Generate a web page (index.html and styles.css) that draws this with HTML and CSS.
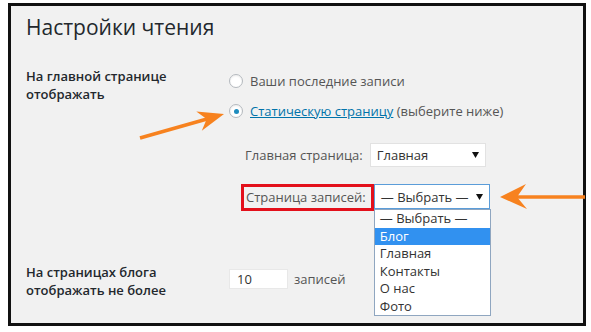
FILE: index.html
```html
<!DOCTYPE html>
<html>
<head>
	<meta charset="utf-8">
	<link rel="stylesheet" href="styles.css">
	<title>Настройки чтения</title>
</head>
<body>
	<div class="frame">
		<h1 class="title">Настройки чтения</h1>

		<div class="setting">
			<div class="setting-label">На главной странице<br>отображать</div>
			<div class="setting-field">
				<label class="choice choice-first"><span class="radio"></span>Ваши последние записи</label>
				<label class="choice choice-second"><span class="radio radio-on"></span><a href="#" class="link">Статическую страницу</a>&nbsp;(выберите ниже)</label>

				<div class="sub sub-main">
					<span class="sub-label">Главная страница:</span>
					<span class="select select-main">
						<span>Главная</span>
						<svg class="caret" width="7" height="6" viewBox="0 0 7 6"><polygon points="0,0 7,0 3.5,6" fill="#111"/></svg>
					</span>
				</div>

				<div class="sub sub-posts">
					<span class="marked">Страница записей:</span>
					<div class="select select-open">
						<span>— Выбрать —</span>
						<svg class="caret" width="7" height="6" viewBox="0 0 7 6"><polygon points="0,0 7,0 3.5,6" fill="#111"/></svg>
						<ul class="options">
							<li>— Выбрать —</li>
							<li class="active">Блог</li>
							<li>Главная</li>
							<li>Контакты</li>
							<li>О нас</li>
							<li>Фото</li>
						</ul>
					</div>
				</div>
			</div>
		</div>

		<div class="setting setting-last">
			<div class="setting-label">На страницах блога<br>отображать не более</div>
			<div class="setting-field">
				<div class="count-line">
					<span class="count">10</span>
					<span>записей</span>
				</div>
			</div>
		</div>
	</div>

	<!-- arrows drawn over the screenshot -->
	<svg class="arrows" width="591" height="332" viewBox="0 0 591 332">
		<line x1="140" y1="138" x2="207" y2="119" stroke="#f7821f" stroke-width="3.5"/>
		<polygon points="224,114 196.3,111.5 206.7,118.9 201.8,130.7" fill="#f7821f"/>
		<line x1="515" y1="197" x2="585" y2="197" stroke="#f7821f" stroke-width="3.5"/>
		<polygon points="500,197 526,184 517,197 527,209" fill="#f7821f"/>
	</svg>
</body>
</html>
```

FILE: styles.css
```css
body {
	margin: 0;
	background-color: #fff;
	font-family: "Open Sans", "Liberation Sans", sans-serif;
	font-size: 13px;
	position: relative;
	width: 591px;
	height: 332px;
	overflow: hidden;
}
.frame {
	margin: 3px 0 0 8px;
	border: 3px solid #111;
	background-color: #f1f1f1;
	padding: 7px 0 0 15px;
	width: 557px;
	height: 310px;
}
.title {
	margin: 0;
	font-size: 21px;
	font-weight: 400;
	line-height: 28px;
	color: #23282d;
}
.setting {
	display: grid;
	grid-template-columns: 203px 1fr;
	margin-top: 26px;
}
.setting-last {
	margin-top: 52px;
}
.setting-label {
	font-weight: 600;
	line-height: 18px;
	color: #23282d;
}
.setting-field {
	color: #555;
	line-height: 18px;
}
.choice {
	display: flex;
	align-items: center;
	height: 20px;
	white-space: nowrap;
}
.choice-first {
	margin-top: 4px;
}
.choice-second {
	margin-top: 10px;
}
.radio {
	width: 12px;
	height: 12px;
	border: 1px solid #b4b9be;
	border-radius: 50%;
	background-color: #fff;
	margin-right: 7px;
	display: flex;
	align-items: center;
	justify-content: center;
	box-shadow: inset 0 1px 2px rgba(0, 0, 0, 0.08);
}
.radio-on::after {
	content: "";
	width: 5px;
	height: 5px;
	border-radius: 50%;
	background-color: #1e8cbe;
}
.link {
	color: #0073aa;
	text-decoration: underline;
}
.sub {
	display: flex;
	align-items: center;
}
.sub-main {
	margin-top: 22px;
	padding-left: 16px;
	height: 24px;
}
.sub-label {
	margin-right: 7px;
}
.select {
	display: flex;
	align-items: center;
	justify-content: space-between;
	background-color: #fff;
	color: #333;
	box-sizing: border-box;
	padding: 0 6px;
}
.select-main {
	width: 116px;
	height: 24px;
	border: 1px solid #e2e2e2;
}
.sub-posts {
	margin-top: 17px;
	padding-left: 12px;
	height: 27px;
	align-items: flex-start;
}
.marked {
	border: 3px solid #e3101b;
	padding: 0 5px 0 2px;
	height: 21px;
	line-height: 20px;
}
.select-open {
	position: relative;
	width: 116px;
	height: 25px;
	border: 1px solid #5b9dd9;
}
.caret {
	display: block;
}
.options {
	position: absolute;
	top: 24px;
	left: -1px;
	width: 117px;
	margin: 0;
	padding: 0;
	list-style: none;
	background-color: #fff;
	border: 1px solid #8fa6c0;
	box-sizing: border-box;
}
.options li {
	height: 17.5px;
	line-height: 17px;
	padding-left: 5px;
	color: #333;
}
.options .active {
	background-color: #3191f0;
	color: #fff;
}
.count-line {
	display: flex;
	align-items: center;
	margin-top: 6px;
	height: 20px;
}
.count {
	width: 59px;
	height: 20px;
	box-sizing: border-box;
	background-color: #fff;
	border: 1px solid #e8e8e8;
	padding-left: 7px;
	line-height: 18px;
	color: #333;
	margin-right: 6px;
}
.arrows {
	position: absolute;
	left: 0;
	top: 0;
	pointer-events: none;
}
```
